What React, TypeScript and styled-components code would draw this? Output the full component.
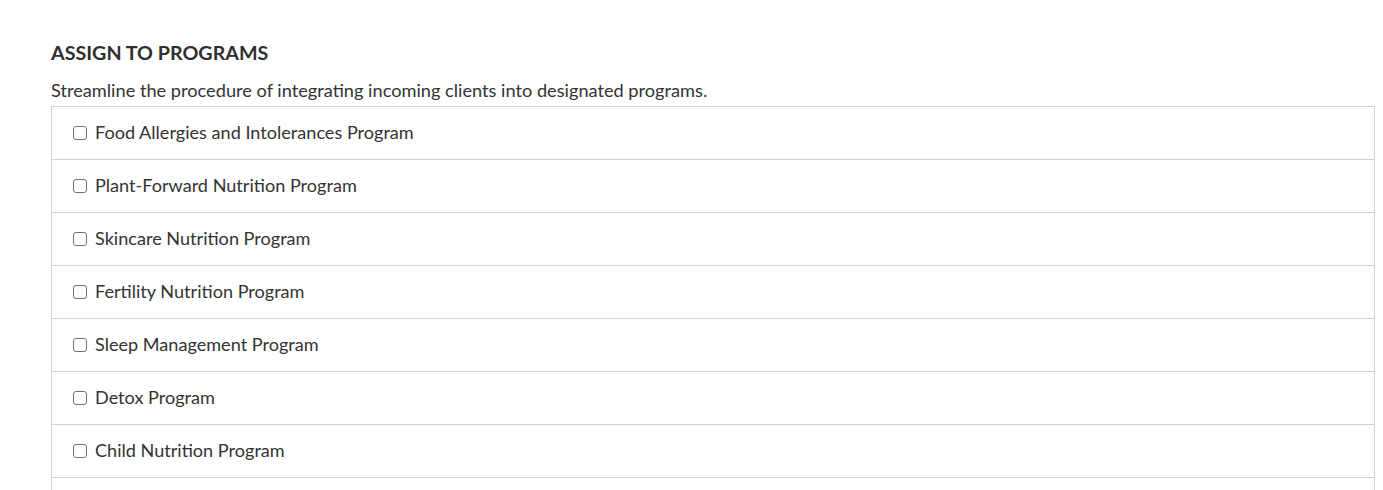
import React from 'react';
import styled, { createGlobalStyle } from 'styled-components';

const GlobalStyle = createGlobalStyle`
  body {
    margin: 0;
    background: #ffffff;
    font-family: Lato, "Noto Sans", sans-serif;
    color: #333333;
  }
`;

const Page = styled.div`
  padding: 41px 8px 0 51px;
`;

const Title = styled.h2`
  margin: 0;
  font-size: 19.7px;
  line-height: 24px;
  font-weight: 700;
  color: #2f2f2f;
`;

const Description = styled.p`
  margin: 14px 0 4px;
  font-size: 18.2px;
  line-height: 23px;
  color: #333333;
`;

const List = styled.div`
  border: 1px solid #d2d2d2;
  border-bottom: none;
`;

const Row = styled.label`
  display: flex;
  align-items: center;
  gap: 8px;
  height: 53px;
  padding: 0 21px 2px;
  box-sizing: border-box;
  border-bottom: 1px solid #d2d2d2;
  font-size: 18.1px;
  color: #333333;
  cursor: pointer;
`;

const Box = styled.input`
  appearance: none;
  margin: 2px 0 0;
  width: 14px;
  height: 14px;
  border: 1px solid #707070;
  border-radius: 3px;
  background: #fff;
  flex-shrink: 0;
`;

const programs = [
  'Food Allergies and Intolerances Program',
  'Plant-Forward Nutrition Program',
  'Skincare Nutrition Program',
  'Fertility Nutrition Program',
  'Sleep Management Program',
  'Detox Program',
  'Child Nutrition Program',
  'Weight Management Program',
];

const App: React.FC = () => {
  return (
    <>
      <GlobalStyle />
      <Page>
        <Title>ASSIGN TO PROGRAMS</Title>
        <Description>
          Streamline the procedure of integrating incoming clients into designated programs.
        </Description>
        <List>
          {programs.map((p) => (
            <Row key={p}>
              <Box type="checkbox" />
              {p}
            </Row>
          ))}
        </List>
      </Page>
    </>
  );
};

export default App;
